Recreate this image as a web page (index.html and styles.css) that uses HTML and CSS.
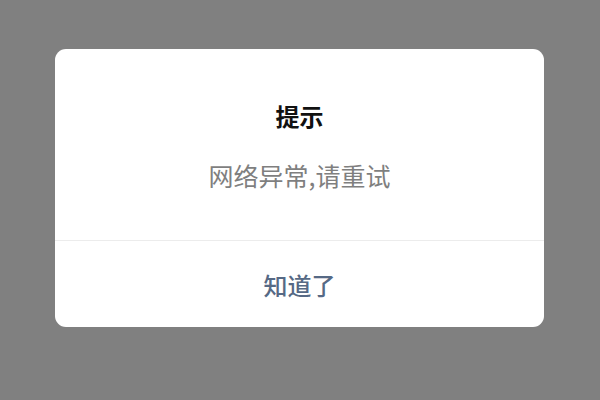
FILE: index.html
```html
<!DOCTYPE html>
<html>
<head>
<meta charset="UTF-8"/>
<title>提示</title>
<link rel="stylesheet" href="styles.css">
</head>
<body>
<div class="mask">
    <div class="dialog">
        <div class="dialog-body">
            <h2 class="dialog-title">提示</h2>
            <p class="dialog-text">网络异常,请重试</p>
        </div>
        <div class="dialog-footer">
            <a class="dialog-btn" href="#">知道了</a>
        </div>
    </div>
</div>
</body>
</html>
```

FILE: styles.css
```css
html, body {
    margin: 0;
    height: 100%;
}
body {
    background: #808080;
    font-family: "Noto Sans CJK SC", "Noto Sans", sans-serif;
}
.mask {
    padding: 49px 56px 0 55px;
}
.dialog {
    background: #fff;
    border-radius: 11px;
    overflow: hidden;
}
.dialog-body {
    height: 192px;
    box-sizing: border-box;
    padding-top: 51px;
    text-align: center;
    border-bottom: 1px solid #ececec;
}
.dialog-title {
    margin: 0;
    font-size: 24px;
    line-height: 32px;
    font-weight: bold;
    color: #111;
}
.dialog-text {
    margin: 27px 0 0;
    font-size: 25px;
    line-height: 32px;
    color: #7f7f7f;
}
.dialog-footer {
    height: 86px;
    display: flex;
    align-items: center;
    justify-content: center;
}
.dialog-btn {
    font-size: 24px;
    font-weight: 500;
    color: #566985;
    text-decoration: none;
}
```
